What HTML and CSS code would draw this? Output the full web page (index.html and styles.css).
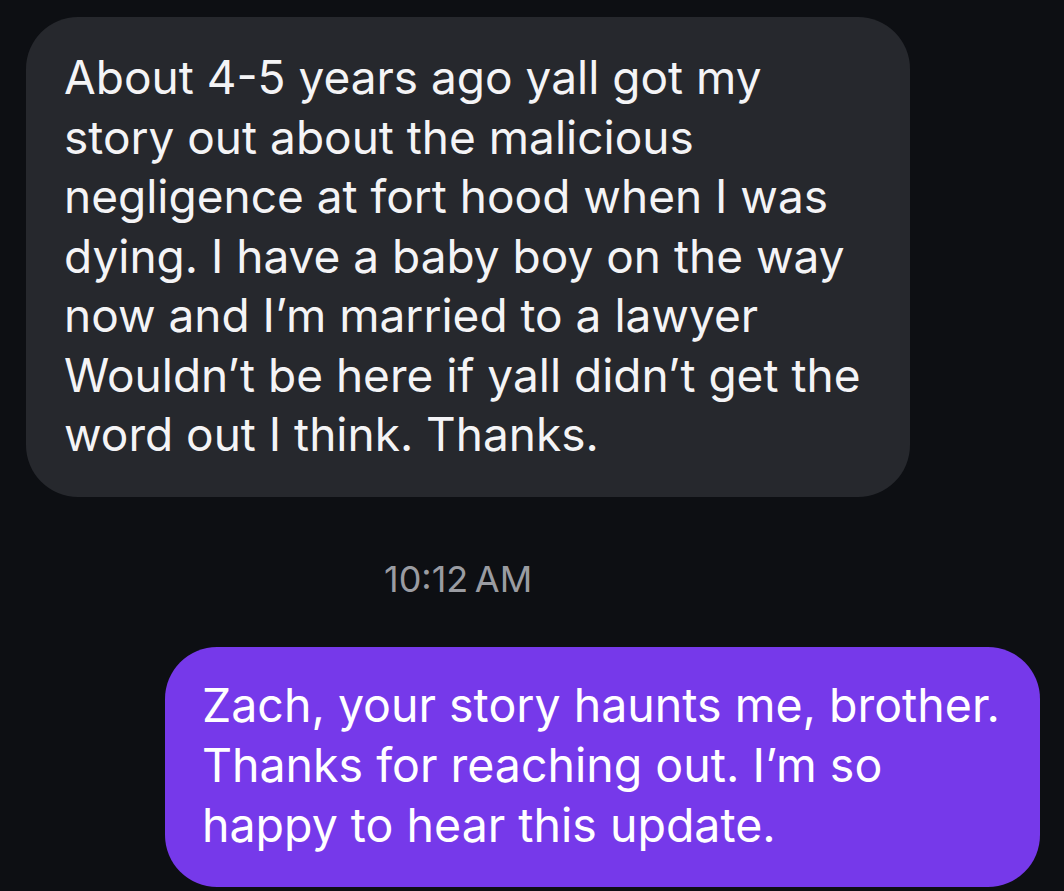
FILE: index.html
```html
<!DOCTYPE html>
<html lang="en">
<head>
    <meta charset="UTF-8">
    <meta name="viewport" content="width=device-width, initial-scale=1.0">
    <title>Messages</title>
    <link rel="stylesheet" href="styles.css">
</head>
<body>

<div class="thread">
    <div class="bubble received">
        About 4-5 years ago yall got my<br>
        story out about the malicious<br>
        negligence at fort hood when I was<br>
        dying. I have a baby boy on the way<br>
        now and I’m married to a lawyer<br>
        Wouldn’t be here if yall didn’t get the<br>
        word out I think. Thanks.
    </div>

    <div class="timestamp">10:12&#8239;AM</div>

    <div class="bubble sent">
        Zach, your story haunts me, brother.<br>
        Thanks for reaching out. I’m so<br>
        happy to hear this update.
    </div>
</div>

</body>
</html>
```

FILE: styles.css
```css
body {
    margin: 0;
    padding: 0;
    background-color: #0d0f13;
    font-family: Inter, "Noto Sans", sans-serif;
    color: #f4f4f6;
    overflow: hidden;
}
.thread {
    display: flex;
    flex-direction: column;
    padding-top: 17px;
}
.bubble {
    font-size: 46px;
    line-height: 59.5px;
    white-space: nowrap;
    border-radius: 52px;
    box-sizing: border-box;
}
.received {
    background-color: #26282d; /* dark grey bubble */
    margin-left: 26px;
    width: 884px;
    padding: 31px 0 32px 38px;
}
.timestamp {
    margin-left: 384px;
    margin-top: 62px;
    font-size: 36px;
    line-height: 40px;
    color: #9a9ca2;
}
.sent {
    background-color: #7639ea; /* purple bubble */
    color: #ffffff;
    font-size: 46.5px;
    margin-left: 165px;
    width: 875px;
    margin-top: 48px;
    padding: 28px 0 32px 37px;
    line-height: 60px;
}
```
